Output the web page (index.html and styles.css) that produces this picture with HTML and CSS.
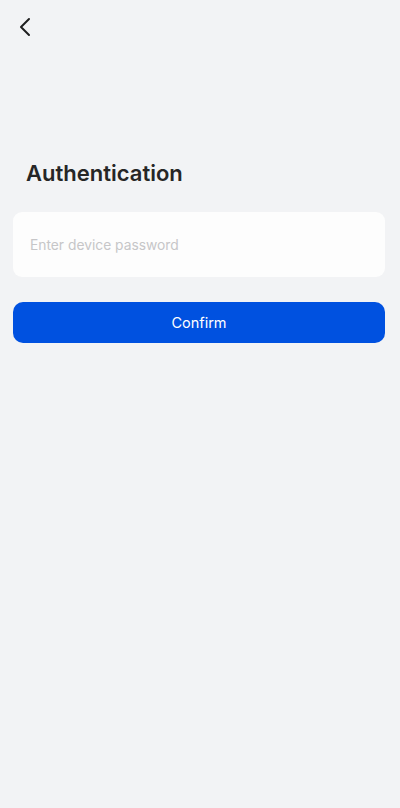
FILE: index.html
```html
<!DOCTYPE html>
<html>
<head>
<meta charset="utf-8">
<link rel="stylesheet" href="styles.css">
</head>
<body>
<div class="page">
  <div class="nav">
    <svg class="back" width="14" height="20" viewBox="0 0 14 20"><path d="M11 2 L3 10 L11 18" fill="none" stroke="#1f1f1f" stroke-width="2" stroke-linecap="round" stroke-linejoin="round"/></svg>
  </div>
  <h1 class="title">Authentication</h1>
  <div class="field"><input class="input" type="password" placeholder="Enter device password"></div>
  <button class="confirm">Confirm</button>
</div>
</body>
</html>
```
FILE: styles.css
```css
html, body { margin: 0; padding: 0; }
body { background: #f2f3f5; font-family: Inter, "Noto Sans", sans-serif; width: 400px; height: 808px; }
.page { padding: 0 15px 0 13px; display: flex; flex-direction: column; }
.nav { height: 55px; display: flex; align-items: center; padding-left: 5px; }
.back { display: block; margin-top: -1px; }
.title { margin: 103px 0 0 13px; font-size: 22px; font-weight: 600; color: #262626; line-height: 30px; letter-spacing: 0; }
.field { margin-top: 24px; background: #fdfdfd; border-radius: 9px; height: 65px; display: flex; align-items: center; padding: 0 17px; }
.input { border: none; outline: none; background: transparent; font-family: inherit; font-size: 13.8px; color: #333; width: 100%; padding: 0; }
.input::placeholder { color: #c6c6c8; }
.confirm { margin-top: 25px; height: 41px; border: none; border-radius: 10px; background: #0051e0; color: #fff; font-family: inherit; font-size: 14.5px; font-weight: 400; }
```
